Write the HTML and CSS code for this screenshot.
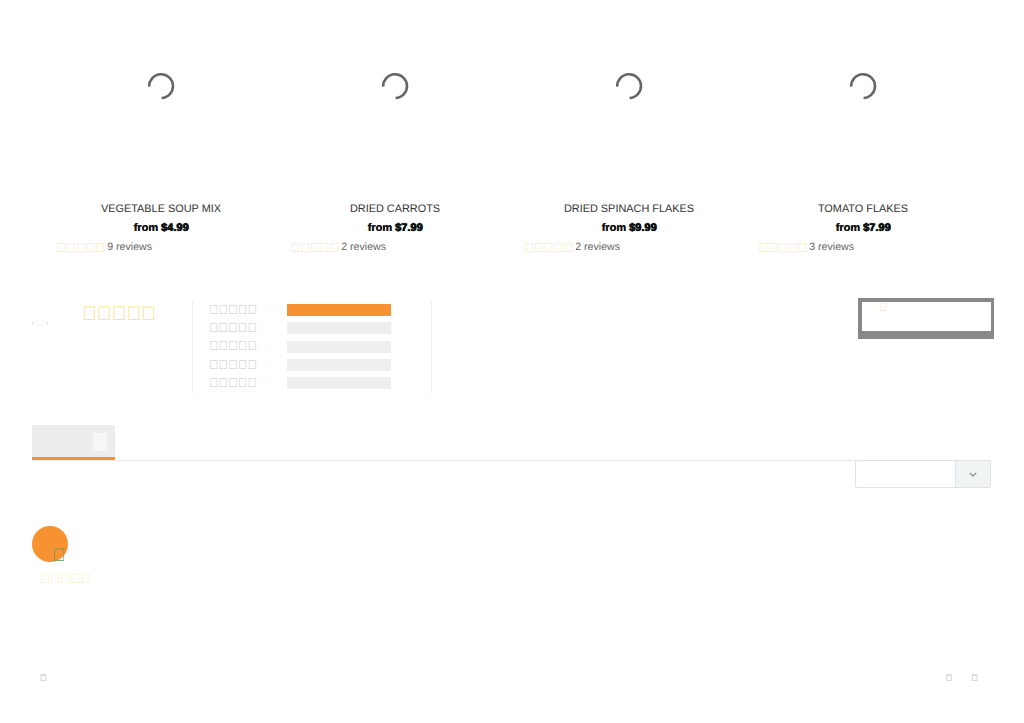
FILE: index.html
```html
<!DOCTYPE html>
<html lang="en">
<head>
<meta charset="utf-8">
<title>Product reviews</title>
<link rel="stylesheet" href="styles.css">
</head>
<body>
<section class="products">
  <article class="product">
    <div class="spinner-box"><svg class="spinner" viewBox="0 0 30 30" width="30" height="30"><path d="M3.2 15.6A11.9 11.9 0 1 1 15.6 27"/></svg></div>
    <h3 class="name">VEGETABLE SOUP MIX</h3>
    <p class="price">from <b>$4.99</b></p>
    <p class="rating"><span class="glyphs stars-sm">&#xf005;&#xf005;&#xf005;&#xf005;&#xf005;</span> 9 reviews</p>
  </article>
  <article class="product">
    <div class="spinner-box"><svg class="spinner" viewBox="0 0 30 30" width="30" height="30"><path d="M3.2 15.6A11.9 11.9 0 1 1 15.6 27"/></svg></div>
    <h3 class="name">DRIED CARROTS</h3>
    <p class="price">from <b>$7.99</b></p>
    <p class="rating"><span class="glyphs stars-sm">&#xf005;&#xf005;&#xf005;&#xf005;&#xf005;</span> 2 reviews</p>
  </article>
  <article class="product">
    <div class="spinner-box"><svg class="spinner" viewBox="0 0 30 30" width="30" height="30"><path d="M3.2 15.6A11.9 11.9 0 1 1 15.6 27"/></svg></div>
    <h3 class="name">DRIED SPINACH FLAKES</h3>
    <p class="price">from <b>$9.99</b></p>
    <p class="rating"><span class="glyphs stars-sm">&#xf005;&#xf005;&#xf005;&#xf005;&#xf005;</span> 2 reviews</p>
  </article>
  <article class="product">
    <div class="spinner-box"><svg class="spinner" viewBox="0 0 30 30" width="30" height="30"><path d="M3.2 15.6A11.9 11.9 0 1 1 15.6 27"/></svg></div>
    <h3 class="name">TOMATO FLAKES</h3>
    <p class="price">from <b>$7.99</b></p>
    <p class="rating"><span class="glyphs stars-sm">&#xf005;&#xf005;&#xf005;&#xf005;&#xf005;</span> 3 reviews</p>
  </article>
</section>

<section class="summary">
  <div class="average">
    <span class="dots"><i class="dot"></i><i class="dot"></i></span>
    <span class="glyphs stars-lg">&#xf005;&#xf005;&#xf005;&#xf005;&#xf005;</span>
  </div>
  <div class="breakdown">
    <div class="row"><span class="glyphs stars-grey">&#xf005;&#xf005;&#xf005;&#xf005;&#xf005;</span><span class="bar bar-full"></span></div>
    <div class="row"><span class="glyphs stars-grey">&#xf005;&#xf005;&#xf005;&#xf005;&#xf005;</span><span class="bar"></span></div>
    <div class="row"><span class="glyphs stars-grey">&#xf005;&#xf005;&#xf005;&#xf005;&#xf005;</span><span class="bar"></span></div>
    <div class="row"><span class="glyphs stars-grey">&#xf005;&#xf005;&#xf005;&#xf005;&#xf005;</span><span class="bar"></span></div>
    <div class="row"><span class="glyphs stars-grey">&#xf005;&#xf005;&#xf005;&#xf005;&#xf005;</span><span class="bar"></span></div>
  </div>
  <div class="write-review"><span class="glyphs write-icon">&#xf040;</span></div>
</section>

<section class="tabs">
  <div class="tab"><span class="tab-count"></span></div>
</section>
<div class="sort">
  <div class="select"><span class="select-value"></span><span class="select-addon"><svg viewBox="0 0 10 6" width="8" height="5"><path d="M1 1l4 4 4-4"/></svg></span></div>
</div>

<section class="review">
  <div class="avatar"><span class="glyphs avatar-icon">&#xf00c;</span></div>
  <span class="glyphs stars-review">&#xf005;&#xf005;&#xf005;&#xf005;&#xf005;</span>
</section>

<footer class="pager">
  <span class="glyphs pager-icon">&#xf104;</span>
  <span class="pager-right"><span class="glyphs pager-icon">&#xf105;</span><span class="glyphs pager-icon">&#xf105;</span></span>
</footer>
</body>
</html>
```

FILE: styles.css
```css
* { box-sizing: border-box; }
html, body { margin: 0; padding: 0; }
body {
  width: 1024px;
  height: 723px;
  overflow: hidden;
  background: #fff;
  font-family: "Liberation Sans", Arial, sans-serif;
  color: #333;
  text-rendering: geometricPrecision;
}
.glyphs { font-family: "Liberation Sans", sans-serif; display: inline-block; line-height: 1; white-space: nowrap; }

.products {
  display: grid;
  grid-template-columns: repeat(4, 234px);
  padding: 71px 0 0 44px;
}
.product { display: flex; flex-direction: column; align-items: center; }
.spinner-box { height: 130px; width: 100%; display: flex; justify-content: center; align-items: flex-start; }
.spinner { display: block; fill: none; stroke: #666; stroke-width: 2.6; }
.name { margin: 0; height: 18px; font-size: 10.9px; line-height: 16px; font-weight: 400; color: #333; }
.price { margin: 1px 0 0; height: 18px; font-size: 11px; line-height: 16px; font-weight: 700; color: #111; text-shadow: .4px 0 0 #111; }
.price b { text-shadow: 0 0 1px #000, .5px 0 0 #000; }
.rating { margin: 0; align-self: flex-start; padding-left: 12.5px; font-size: 10.6px; line-height: 18px; color: #666; display: flex; align-items: center; gap: 2px; }
.stars-sm { font-size: 13px; color: #fbe7a0; }

.summary { display: flex; align-items: flex-start; margin-top: 43px; padding-left: 32px; height: 96px; }
.average { width: 160px; height: 92px; margin-top: 2px; display: flex; align-items: flex-start; }
.dots { width: 50px; margin-top: 22px; display: flex; gap: 14px; }
.dot { display: block; width: 1px; height: 1px; background: #bbb; }
.stars-lg { font-size: 19.8px; color: #fbe27e; margin-top: 4px; }
.breakdown {
  width: 240px; height: 92px; margin-top: 2px;
  border-left: 1px solid #eee; border-right: 1px solid #eee;
  padding: 3px 0 0 16px;
  display: flex; flex-direction: column; gap: 6.3px;
}
.row { display: flex; align-items: center; height: 12px; }
.stars-grey { width: 78px; font-size: 12.8px; color: #c8c8c8; }
.bar { width: 104px; height: 12px; background: #eee; }
.bar-full { background: #f79232; }
.write-review {
  margin-left: auto; margin-right: 30px; width: 136px; height: 41px; margin-top: -1px;
  border-style: solid; border-color: #888; border-width: 4px 3px 8px 4px;
  background: #fff; padding: 1px 0 0 17px;
}
.write-icon { display: block; font-size: 11px; color: #f9d9b0; }

.tabs { margin: 30px 33px 0 32px; border-bottom: 1px solid #e9e9e9; height: 36px; }
.tab { width: 83px; height: 35px; background: #ededed; border-bottom: 3px solid #f79232; padding: 8px 0 0 61px; }
.tab-count { display: block; width: 14px; height: 18px; background: #f6f6f6; }

.sort { display: flex; justify-content: flex-end; padding-right: 33px; margin-top: -1px; }
.select { width: 136px; height: 28px; display: flex; border: 1px solid #dfe3e3; border-radius: 2px; background: #fff; }
.select-value { flex: 1; }
.select-addon { width: 35px; background: #f1f4f4; border-left: 1px solid #dfe3e3; display: flex; align-items: center; justify-content: center; }
.select-addon svg { fill: none; stroke: #777; stroke-width: 1.3; }

.review { margin-top: 38px; padding-left: 32px; height: 98px; position: relative; }
.avatar { width: 36px; height: 36px; border-radius: 50%; background: #f79232; position: relative; }
.avatar-icon { position: absolute; left: 20px; top: 20px; font-size: 18px; color: #6f9a55; }
.stars-review { display: block; margin: 10px 0 0 8px; font-size: 13.5px; color: #fdeeb8; }

.pager { margin-top: 50px; padding: 0 46px 0 40px; display: flex; justify-content: space-between; align-items: center; }
.pager-right { display: flex; gap: 19px; }
.pager-icon { font-size: 9px; color: #888; }
```
